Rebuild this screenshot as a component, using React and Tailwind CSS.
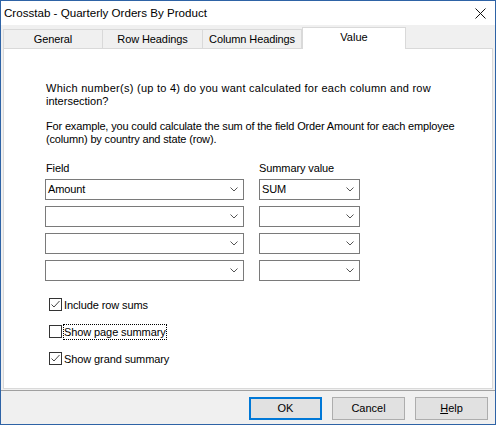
import React from "react";

const ui = { fontFamily: "'Liberation Sans', Arial, sans-serif" };

function Chevron() {
  return (
    <svg width="8" height="5" viewBox="0 0 8 5" className="shrink-0">
      <path d="M0.5 0.5 L4 4 L7.5 0.5" fill="none" stroke="#555" strokeWidth="1" />
    </svg>
  );
}

function Combo({ value, width }) {
  return (
    <div
      className={`${width} h-[21px] border border-[#7a7a7a] bg-white flex items-center pl-[2px] pr-[5px]`}
    >
      <span className="flex-1 text-[11px] tracking-[-0.1px] text-black leading-none">{value}</span>
      <Chevron />
    </div>
  );
}

function Check({ checked, label, focused }) {
  return (
    <div className="flex items-center h-[13px]">
      <div className="w-[13px] h-[13px] border border-[#333] bg-white flex items-center justify-center">
        {checked && (
          <svg width="11" height="11" viewBox="0 0 11 11">
            <path d="M1.5 5.5 L4 8 L9.5 2" fill="none" stroke="#444" strokeWidth="1" />
          </svg>
        )}
      </div>
      <span
        className={`ml-[2px] text-[11px] tracking-[-0.1px] leading-[14px] text-black ${
          focused ? "outline outline-1 outline-dotted outline-black" : ""
        }`}
      >
        {label}
      </span>
    </div>
  );
}

function Tab({ label, active, width }) {
  if (active) {
    return (
      <div
        className={`${width} h-[22px] -mb-px relative z-10 bg-white border border-b-0 border-[#d9d9d9] flex justify-center pt-[2px] text-[11px] leading-[14px] text-black`}
      >
        {label}
      </div>
    );
  }
  return (
    <div
      className={`${width} h-[19px] bg-[#f0f0f0] border border-b-0 border-[#d9d9d9] -ml-px first:ml-0 flex items-center justify-center text-[11px] tracking-[-0.1px] leading-[14px] text-black`}
    >
      {label}
    </div>
  );
}

function Button({ children, primary }) {
  return (
    <button
      className={`w-[73px] h-[23px] bg-[#e1e1e1] text-[11px] text-black ${
        primary ? "border-2 border-[#0078d7]" : "border border-[#adadad]"
      }`}
    >
      {children}
    </button>
  );
}

export default function App() {
  const rows = [
    ["Amount", "SUM"],
    ["", ""],
    ["", ""],
    ["", ""],
  ];
  return (
    <div
      className="w-[496px] h-[425px] border border-[#2e63a6] bg-[#f0f0f0] flex flex-col overflow-hidden"
      style={ui}
    >
      {/* title bar */}
      <div className="h-[24px] bg-white flex items-center justify-between pl-[3px] pr-[9px] shrink-0">
        <span className="text-[11.6px] text-black">Crosstab - Quarterly Orders By Product</span>
        <svg width="11" height="11" viewBox="0 0 11 11">
          <path d="M0.5 0.5 L10.5 10.5 M10.5 0.5 L0.5 10.5" stroke="#111" strokeWidth="1" />
        </svg>
      </div>

      {/* tabs */}
      <div className="flex items-end h-[22px] mt-px pl-[2px] shrink-0">
        <Tab label="General" width="w-[100px]" />
        <Tab label="Row Headings" width="w-[101px]" />
        <Tab label="Column Headings" width="w-[100px]" />
        <Tab label="Value" width="w-[104px]" active />
      </div>

      {/* panel */}
      <div className="mx-[2px] h-[341px] bg-white border border-[#d9d9d9] pt-[33px] pl-[42px] text-black shrink-0">
        <p className="text-[11px] leading-[13px] whitespace-nowrap">
          <span className="tracking-[0.26px]">
            Which number(s) (up to 4) do you want calculated for each column and row
          </span>
          <br />
          intersection?
        </p>
        <p className="text-[11px] leading-[13px] mt-[12px] whitespace-nowrap tracking-[-0.16px]">
          For example, you could calculate the sum of the field Order Amount for each employee
          <br />
          (column) by country and state (row).
        </p>

        <div className="flex gap-[15px] mt-[15px] text-[11px] tracking-[-0.1px]">
          <div className="flex flex-col">
            <span className="leading-[14px] mb-[4px]">Field</span>
            <div className="flex flex-col gap-[6px] -ml-px">
              {rows.map((r, i) => (
                <Combo key={i} value={r[0]} width="w-[199px]" />
              ))}
            </div>
          </div>
          <div className="flex flex-col">
            <span className="leading-[14px] mb-[4px]">Summary value</span>
            <div className="flex flex-col gap-[6px]">
              {rows.map((r, i) => (
                <Combo key={i} value={r[1]} width="w-[101px]" />
              ))}
            </div>
          </div>
        </div>

        <div className="flex flex-col gap-[14px] mt-[17px] pl-[3px]">
          <Check checked label="Include row sums" />
          <Check label="Show page summary" focused />
          <Check checked label="Show grand summary" />
        </div>
      </div>

      {/* separator */}
      <div className="h-px bg-[#a0a0a0] mt-px shrink-0" />

      {/* buttons */}
      <div className="flex justify-end gap-[10px] pt-[6px] pr-[7px]">
        <Button primary>OK</Button>
        <Button>Cancel</Button>
        <Button>
          <span className="underline">H</span>elp
        </Button>
      </div>
    </div>
  );
}
